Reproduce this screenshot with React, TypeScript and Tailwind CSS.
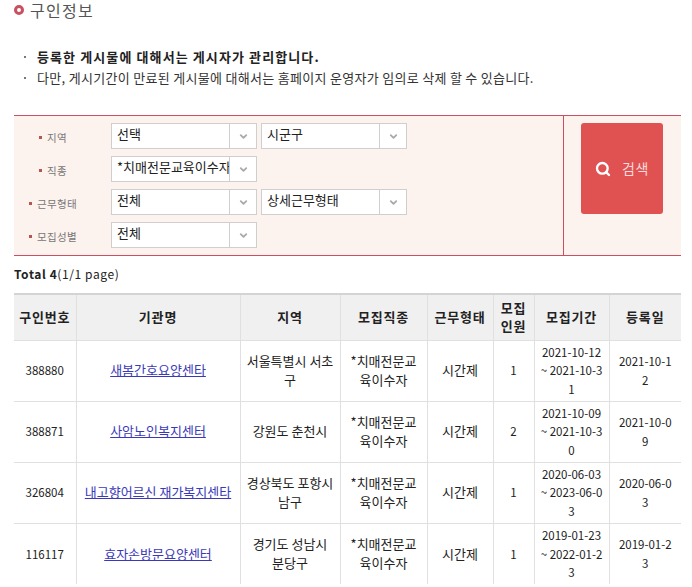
import React from 'react';
import { ChevronDown, Search } from 'lucide-react';

const font = 'font-["Noto_Sans_CJK_KR","Liberation_Sans",sans-serif]';

interface Job {
  id: string;
  org: string;
  area: string;
  count: number;
  period: string;
  date: string;
}

const jobs: Job[] = [
  { id: '388880', org: '새봄간호요양센타', area: '서울특별시 서초구', count: 1, period: '2021-10-12 ~ 2021-10-31', date: '2021-10-12' },
  { id: '388871', org: '사암노인복지센터', area: '강원도 춘천시', count: 2, period: '2021-10-09 ~ 2021-10-30', date: '2021-10-09' },
  { id: '326804', org: '내고향어르신 재가복지센타', area: '경상북도 포항시 남구', count: 1, period: '2020-06-03 ~ 2023-06-03', date: '2020-06-03' },
  { id: '116117', org: '효자손방문요양센터', area: '경기도 성남시 분당구', count: 1, period: '2019-01-23 ~ 2022-01-23', date: '2019-01-23' },
];

function Select({ value }: { value: string }) {
  return (
    <div className="flex h-[26px] w-[146px] items-stretch border border-[#cfcfcf] bg-white">
      <div className="flex-1 overflow-hidden whitespace-nowrap pl-[5px] text-[13px] leading-[20px] text-[#222]">{value}</div>
      <div className="flex w-[27px] flex-none items-center justify-center border-l border-[#cfcfcf]">
        <ChevronDown className="h-[11px] w-[11px] text-[#aaa]" strokeWidth={4} />
      </div>
    </div>
  );
}

function FilterRow({ label, values }: { label: string; values: string[] }) {
  return (
    <div className="flex items-center">
      <div className="mr-[19px] flex w-[78px] items-center justify-center pt-[3px] text-[10.5px] tracking-[0.4px] text-[#777]">
        <span className="mr-[5px] h-[3px] w-[3px] bg-[#b5574f]" />
        {label}
      </div>
      <div className="flex gap-[4px]">
        {values.map((v) => (
          <Select key={v} value={v} />
        ))}
      </div>
    </div>
  );
}

export default function App() {
  const th = 'border-l border-[#e0e0e0] first:border-l-0 bg-[#f0f0f0] px-0 text-[13px] font-bold leading-[18px] tracking-[0.8px] text-[#222]';
  const td = 'border-l border-t border-[#e0e0e0] first:border-l-0 text-center leading-[18.5px] text-[#222] break-all';
  const ko = `${td} px-[6px] text-[13px]`;
  const num = `${td} px-[7px] text-[11.5px]`;

  return (
    <div className={`h-[587px] w-[692px] overflow-hidden bg-white ${font}`}>
      <div className="flex items-center pl-[14px]">
        <span className="h-[10px] w-[10px] rounded-full border-[3px] border-[#c8505f]" />
        <h2 className="ml-[6px] text-[16px] leading-[20px] tracking-[1.3px] text-[#555]">구인정보</h2>
      </div>

      <ul className="mt-[27px] pl-[24px] text-[13px] text-[#333]">
        <li className="flex h-[20px] items-center font-bold tracking-[1.1px] text-[#222]">
          <span className="mr-[11px] h-[2px] w-[2px] bg-[#777]" />
          등록한 게시물에 대해서는 게시자가 관리합니다.
        </li>
        <li className="mt-[1px] flex h-[20px] items-center tracking-[0.3px]">
          <span className="mr-[11px] h-[2px] w-[2px] bg-[#777]" />
          다만, 게시기간이 만료된 게시물에 대해서는 홈페이지 운영자가 임의로 삭제 할 수 있습니다.
        </li>
      </ul>

      <div className="ml-[14px] mt-[27px] flex h-[141px] w-[667px] border-y border-[#c8505f] bg-[#fdf3ee]">
        <div className="flex w-[549px] flex-col gap-[7px] pt-[7px]">
          <FilterRow label="지역" values={['선택', '시군구']} />
          <FilterRow label="직종" values={['*치매전문교육이수자']} />
          <FilterRow label="근무형태" values={['전체', '상세근무형태']} />
          <FilterRow label="모집성별" values={['전체']} />
        </div>
        <div className="flex-1 border-l border-[#c8505f] pl-[17px] pt-[7px]">
          <button className="flex h-[91px] w-[82px] items-center justify-center rounded-[3px] bg-[#e05252] text-[14px] tracking-[0.5px] text-[#fbdcdc]">
            <Search className="mr-[11px] h-[16px] w-[16px] text-white" strokeWidth={3.5} />
            검색
          </button>
        </div>
      </div>

      <p className="ml-[14px] mt-[10px] text-[12px] leading-[16px] tracking-[0.6px] text-[#222]">
        <b className="font-bold">Total 4</b>(1/1 page)
      </p>

      <table className="ml-[14px] mt-[11px] w-[667px] table-fixed border-collapse border-t-2 border-[#d4d4d4]">
        <colgroup>
          <col className="w-[62px]" />
          <col className="w-[164px]" />
          <col className="w-[100px]" />
          <col className="w-[87px]" />
          <col className="w-[66px]" />
          <col className="w-[41px]" />
          <col className="w-[75px]" />
          <col className="w-[72px]" />
        </colgroup>
        <thead>
          <tr className="h-[46px]">
            <th className={th}>구인번호</th>
            <th className={th}>기관명</th>
            <th className={th}>지역</th>
            <th className={th}>모집직종</th>
            <th className={th}>근무형태</th>
            <th className={th}>모집 인원</th>
            <th className={th}>모집기간</th>
            <th className={th}>등록일</th>
          </tr>
        </thead>
        <tbody>
          {jobs.map((job) => (
            <tr key={job.id} className="h-[61px]">
              <td className={num}>{job.id}</td>
              <td className={ko}>
                <a href="#" className="text-[#3a3ab8] underline">{job.org}</a>
              </td>
              <td className={ko}>{job.area}</td>
              <td className={ko}>*치매전문교육이수자</td>
              <td className={ko}>시간제</td>
              <td className={num}>{job.count}</td>
              <td className={`${td} px-[4px] text-[11.5px]`}>{job.period}</td>
              <td className={num}>{job.date}</td>
            </tr>
          ))}
        </tbody>
      </table>
    </div>
  );
}
